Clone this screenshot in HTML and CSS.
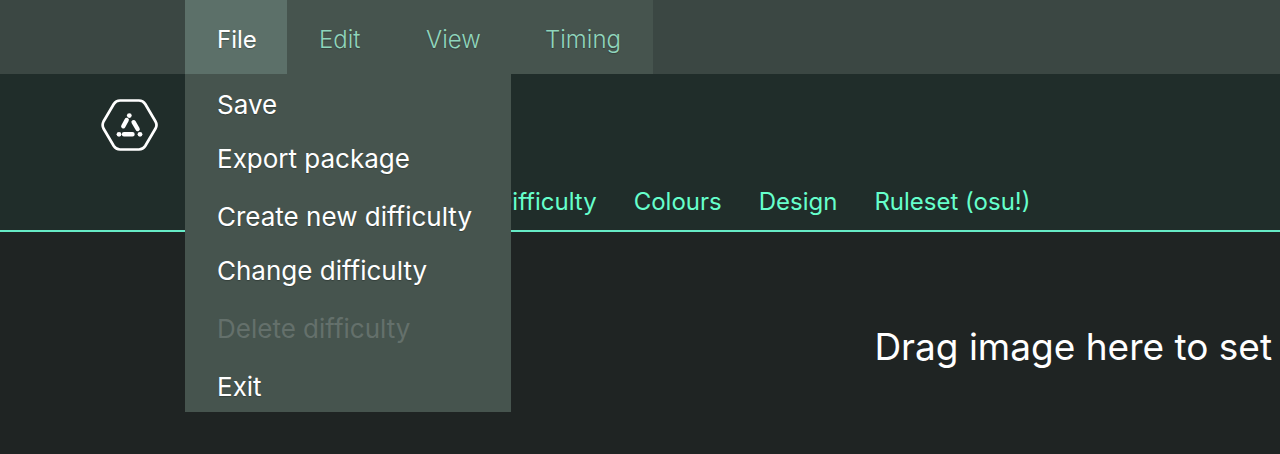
FILE: index.html
```html
<!DOCTYPE html>
<html lang="en">
<head>
  <meta charset="UTF-8" />
  <title>Beatmap Editor</title>
  <link rel="stylesheet" href="styles.css">
</head>
<body>

<nav class="menu-bar">
  <div class="menu">
    <button class="menu-item active" type="button" aria-expanded="true">File</button>
    <button class="menu-item" type="button">Edit</button>
    <button class="menu-item" type="button">View</button>
    <button class="menu-item" type="button">Timing</button>

    <!-- File menu -->
    <div class="dropdown">
      <div class="group">
        <button type="button">Save</button>
        <button type="button">Export package</button>
      </div>
      <div class="group">
        <button type="button">Create new difficulty</button>
        <button type="button">Change difficulty</button>
      </div>
      <div class="group">
        <button type="button" disabled>Delete difficulty</button>
      </div>
      <div class="group">
        <button type="button">Exit</button>
      </div>
    </div>
  </div>
</nav>

<header class="header">
  <svg class="logo" viewBox="0 0 58 54" width="58" height="54" fill="none" stroke="#fff" stroke-linecap="round" stroke-linejoin="round">
    <path stroke-width="2.7" d="M19 2.5H38Q42 2.5 44.2 6L54.5 23.5Q56.5 27 54.5 30.5L44.2 48Q42 51.5 38 51.5H19Q15 51.5 12.8 48L2.5 30.5Q0.8 27 2.5 23.5L12.8 6Q15 2.5 19 2.5Z" />
    <path stroke-width="4.4" d="M22.3 28.3L25.7 22M32.6 24.2L36.6 31M23 36.3H31.500" />
    <g fill="#fff" stroke="none">
      <circle cx="28.300" cy="17.600" r="2.400" />
      <circle cx="18" cy="36.300" r="2.400" />
      <circle cx="39" cy="36.300" r="2.400" />
    </g>
  </svg>
  <nav class="tabs">
    <a href="#difficulty">Difficulty</a>
    <a href="#colours">Colours</a>
    <a href="#design">Design</a>
    <a href="#ruleset">Ruleset (osu!)</a>
  </nav>
</header>

<main class="content">
  <p class="drop-hint">Drag image here to set</p>
</main>

</body>
</html>
```

FILE: styles.css
```css
body {
  margin: 0;
  min-height: 100vh;
  font-family: Inter, "Open Sans", sans-serif;
  font-size: 24px;
  background: #1f2423;
  color: #fff;
  overflow-x: hidden;
}

button {
  border: none;
  background: none;
  font: inherit;
  color: inherit;
  text-align: left;
  cursor: pointer;
}

.menu-bar {
  background: #3b4743;
  padding-left: 185px;
}

.menu {
  position: relative;
  display: grid;
  grid-template-columns: 102px 107px 119px 140px;
  width: max-content;
  background: #46544e;
}

.menu-item {
  height: 74px;
  padding: 4px 0 0 32px;
  color: #90d5bc;
  font-weight: 300;
  text-shadow: 0 1px 1px rgba(0, 0, 0, 0.25);
}

.menu-item.active {
  background: #5c7069;
  color: #fff;
  font-weight: 400;
}

/* opens over the header */
.dropdown {
  position: absolute;
  top: 100%;
  left: 0;
  width: 326px;
  display: flex;
  flex-direction: column;
  gap: 4px;
  padding-bottom: 2px;
  background: #46544e;
}

.group {
  display: flex;
  flex-direction: column;
}

.dropdown button {
  height: 54px;
  padding: 6px 32px 0;
  font-size: 26px;
  white-space: nowrap;
  text-shadow: 0 1px 1px rgba(0, 0, 0, 0.25);
}

.dropdown button:disabled {
  color: #64706b;
  text-shadow: none;
  cursor: default;
}

.header {
  display: flex;
  flex-direction: column;
  justify-content: space-between;
  height: 158px;
  box-sizing: border-box;
  padding: 24px 0 13px 101px;
  background: #202d2a;
  border-bottom: 2px solid #66ebc6;
}

.logo {
  display: block;
}

.tabs {
  display: flex;
  gap: 37px;
  padding-left: 394px;
}

.tabs a {
  color: #66ffcc;
  line-height: 30px;
  text-decoration: none;
  white-space: nowrap;
}

.content {
  display: flex;
  justify-content: flex-end;
  padding: 93px 8px 0 0;
}

.drop-hint {
  margin: 0;
  font-size: 37px;
  line-height: 44px;
  white-space: nowrap;
}
```
